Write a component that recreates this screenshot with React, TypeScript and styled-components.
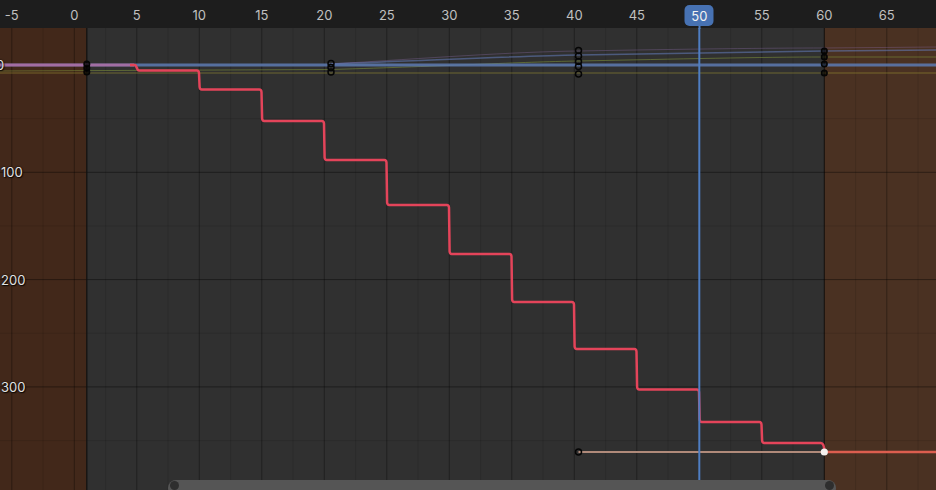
import React from 'react';
import styled, { createGlobalStyle } from 'styled-components';

// frame / value -> page pixel mapping of the graph view
const fx = (f: number) => 74.3 + 12.5 * f;
const vy = (v: number) => 65 + 1.073 * v;
const RULER_H = 28;
const WIDTH = 936;

const frames = [-5, 0, 5, 10, 15, 20, 25, 30, 35, 40, 45, 55, 60, 65];
const valueLabels = [0, 100, 200, 300];

// one level per 5 frame block, starting at frame 5
const levels = [70.5, 89.5, 121, 160, 205, 254, 302, 349, 389.5, 422, 443];

const step = (x: number, y1: number, y2: number) => {
  const s = Math.sign(y2 - y1);
  return `L ${x - 2.5} ${y1} Q ${x - 0.5} ${y1} ${x - 0.3} ${y1 + s * 2.5} L ${x + 0.3} ${y2 - s * 2.5} Q ${x + 0.5} ${y2} ${x + 2.5} ${y2}`;
};

const buildStairs = () => {
  let d = `M 130 65 ` + step(fx(5), 65, levels[0]);
  for (let i = 1; i < levels.length; i++) {
    d += ' ' + step(fx(5 * (i + 1)), levels[i - 1], levels[i]);
  }
  const last = levels[levels.length - 1];
  d += ` L ${fx(60) - 3.5} ${last} Q ${fx(60)} ${last} ${fx(60)} 452`;
  return d;
};

const GlobalStyle = createGlobalStyle`
  html, body {
    margin: 0;
    padding: 0;
    background: #303030;
    overflow: hidden;
  }
  body {
    font-family: Inter, "DejaVu Sans", sans-serif;
  }
`;

export default function App() {
  const gridV: { x: number; major: boolean }[] = [];
  for (let f = -7.5; f <= 72.5; f += 2.5) {
    gridV.push({ x: fx(f), major: f % 5 === 0 });
  }
  const gridH: { y: number; major: boolean }[] = [];
  for (let v = -50; v <= 400; v += 50) {
    gridH.push({ y: vy(v), major: v % 100 === 0 });
  }

  return (
    <>
      <GlobalStyle />
      <Editor>
        <Ruler>
          {frames.map(f => (
            <FrameLabel key={f} style={{ left: fx(f) }}>{f}</FrameLabel>
          ))}
          <PlayheadBadge style={{ left: fx(50) }}>50</PlayheadBadge>
        </Ruler>

        <Canvas>
          <GraphSvg width={WIDTH} height={490 - RULER_H}>
            <g transform={`translate(0, ${-RULER_H})`}>
              {/* out of range areas */}
              <rect x={0} y={RULER_H} width={fx(1)} height={500} fill="#42281a" />
              <rect x={fx(60)} y={RULER_H} width={WIDTH - fx(60)} height={500} fill="#4a3122" />

              {gridV.map((g, i) => (
                <line key={'v' + i} x1={g.x} x2={g.x} y1={RULER_H} y2={490}
                  stroke={g.major ? 'rgba(0,0,0,0.34)' : 'rgba(0,0,0,0.11)'} strokeWidth={1} />
              ))}
              {gridH.map((g, i) => (
                <line key={'h' + i} x1={0} x2={WIDTH} y1={g.y} y2={g.y}
                  stroke={g.major ? 'rgba(0,0,0,0.4)' : 'rgba(0,0,0,0.1)'} strokeWidth={1} />
              ))}
              <line x1={fx(1)} x2={fx(1)} y1={RULER_H} y2={490} stroke="#111" strokeWidth={1.2} />
              <line x1={fx(60)} x2={fx(60)} y1={RULER_H} y2={490} stroke="rgba(0,0,0,0.45)" strokeWidth={1} />

              {/* other channels near zero */}
              <path d="M 0 73 L 936 73" stroke="rgba(150,140,50,0.6)" strokeWidth={1} fill="none" />
              <path d="M 0 71 L 331 69.5 C 450 66, 520 62, 578 61 C 680 59, 760 57, 824 57 L 936 57"
                stroke="rgba(130,150,60,0.55)" strokeWidth={1} fill="none" />
              <path d="M 331 64 C 440 60, 520 56, 578 55 C 680 53, 760 52, 824 51 L 936 50"
                stroke="rgba(100,125,190,0.55)" strokeWidth={1.5} fill="none" />
              <path d="M 331 64 C 430 58, 510 52, 578 51 C 690 49, 770 48, 824 48 L 936 47"
                stroke="rgba(140,110,170,0.35)" strokeWidth={1} fill="none" />
              <path d="M 0 65 L 936 65" stroke="rgba(95,125,180,0.85)" strokeWidth={3} fill="none" />
              <path d="M 0 65 L 134 65" stroke="rgba(225,110,170,0.55)" strokeWidth={3} fill="none" />

              {/* stepped location curve */}
              <path d={buildStairs()} stroke="#e4445a" strokeWidth={2.5} fill="none" strokeLinejoin="round" />
              <path d={`M 578.5 452 L ${fx(60)} 452`} stroke="#b08a7a" strokeWidth={2} />
              <path d={`M ${fx(60)} 452 L 936 452`} stroke="#dc5e4f" strokeWidth={2.5} />

              {/* keyframes */}
              {[64, 68, 72].map(y => <Key key={'a' + y} cx={fx(1)} cy={y} r={2.8} fill="rgba(0,0,0,0.7)" />)}
              {[63.5, 67.5, 72].map(y => <Key key={'b' + y} cx={331} cy={y} r={3} />)}
              {[50.5, 56, 61.5, 66.5, 74].map(y => <Key key={'c' + y} cx={578.5} cy={y} r={3} />)}
              {[51, 57, 64, 73].map(y => <Key key={'d' + y} cx={824.3} cy={y} r={2.8} fill="rgba(0,0,0,0.6)" />)}
              <Key cx={578.5} cy={452} r={3} />
              <circle cx={fx(60)} cy={452} r={3.6} fill="#f4f0ee" />

              {/* playhead */}
              <line x1={fx(50)} x2={fx(50)} y1={RULER_H} y2={490} stroke="#4f7ec2" strokeWidth={2} />
            </g>
          </GraphSvg>

          {valueLabels.map(v => (
            <ValueLabel key={v} $offset={v === 0 ? -4 : 1} style={{ top: vy(v) - RULER_H - 8 }}>
              {v}
            </ValueLabel>
          ))}

          <ScrollBar>
            <ScrollKnob />
            <ScrollKnob />
          </ScrollBar>
        </Canvas>
      </Editor>
    </>
  );
}

const Key = (props: { cx: number; cy: number; r: number; fill?: string }) => (
  <circle cx={props.cx} cy={props.cy} r={props.r} fill={props.fill || 'none'} stroke="#050505" strokeWidth={1.5} />
);

const Editor = styled.div`
  width: 936px;
  height: 490px;
  display: flex;
  flex-direction: column;
  overflow: hidden;
  background: #303030;
`;

const Ruler = styled.div`
  position: relative;
  height: ${RULER_H}px;
  flex-shrink: 0;
  background: #1d1d1d;
  z-index: 2;
`;

const FrameLabel = styled.span`
  position: absolute;
  top: 7px;
  transform: translateX(-50%);
  font-size: 13px;
  line-height: 16px;
  color: #c0c0c0;
  white-space: nowrap;
`;

const PlayheadBadge = styled.div`
  position: absolute;
  top: 5px;
  width: 29px;
  height: 21px;
  transform: translateX(-50%);
  border-radius: 5px;
  background: #4772b3;
  color: #f2f2f2;
  font-size: 13px;
  display: flex;
  align-items: center;
  justify-content: center;

  &::after {
    content: '';
    position: absolute;
    left: 50%;
    top: 21px;
    width: 2px;
    height: 3px;
    margin-left: -1px;
    background: #4f7ec2;
  }
`;

const Canvas = styled.div`
  position: relative;
  flex: 1;
  overflow: hidden;
`;

const GraphSvg = styled.svg`
  display: block;
`;

const ValueLabel = styled.span<{ $offset: number }>`
  position: absolute;
  left: ${p => p.$offset}px;
  font-size: 13px;
  line-height: 16px;
  color: #e2e2e2;
  text-shadow: 0 0 2px #000, 1px 1px 1px rgba(0, 0, 0, 0.8);
`;

const ScrollBar = styled.div`
  position: absolute;
  left: 168px;
  width: 668px;
  bottom: -6px;
  height: 16px;
  border-radius: 8px;
  background: #555555;
  display: flex;
  justify-content: space-between;
  align-items: flex-start;
  padding: 1px 2px 0;
  box-sizing: border-box;
`;

const ScrollKnob = styled.div`
  width: 9px;
  height: 9px;
  border-radius: 50%;
  background: #2e2e2e;
`;
